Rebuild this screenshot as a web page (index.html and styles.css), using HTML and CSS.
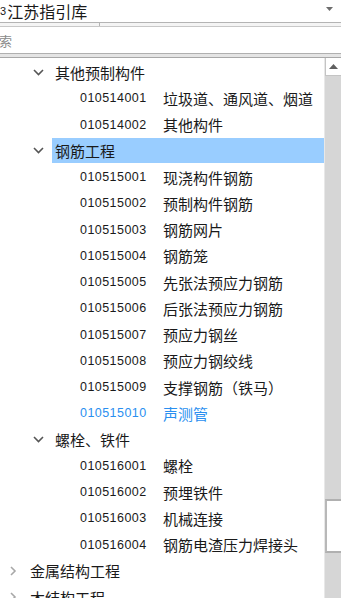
FILE: index.html
```html
<!DOCTYPE html>
<html>
<head>
<meta charset="utf-8">
<link rel="stylesheet" href="styles.css">
</head>
<body>
<div class="combo">
  <span class="combo-text"><span class="num">3</span>江苏指引库</span>
  <svg class="combo-arrow" width="7" height="4" viewBox="0 0 7 4"><polygon points="0,0 7,0 3.5,4" fill="#6d6d6d"/></svg>
</div>
<div class="splitter"><span class="tick"></span></div>
<div class="search"><span class="placeholder">搜索</span></div>
<div class="sep"></div>
<div class="tree">
  <div class="list">
    <div class="row l1">
      <svg class="chev" width="11" height="7" viewBox="0 0 11 7"><polyline points="1,1 5.5,5.5 10,1" fill="none" stroke="#555" stroke-width="1.6"/></svg>
      <span class="label">其他预制构件</span>
    </div>
    <div class="row l2"><span class="code">010514001</span><span class="name">垃圾道、通风道、烟道</span></div>
    <div class="row l2"><span class="code">010514002</span><span class="name">其他构件</span></div>
    <div class="row l1">
      <svg class="chev" width="11" height="7" viewBox="0 0 11 7"><polyline points="1,1 5.5,5.5 10,1" fill="none" stroke="#555" stroke-width="1.6"/></svg>
      <span class="label selected">钢筋工程</span>
    </div>
    <div class="row l2"><span class="code">010515001</span><span class="name">现浇构件钢筋</span></div>
    <div class="row l2"><span class="code">010515002</span><span class="name">预制构件钢筋</span></div>
    <div class="row l2"><span class="code">010515003</span><span class="name">钢筋网片</span></div>
    <div class="row l2"><span class="code">010515004</span><span class="name">钢筋笼</span></div>
    <div class="row l2"><span class="code">010515005</span><span class="name">先张法预应力钢筋</span></div>
    <div class="row l2"><span class="code">010515006</span><span class="name">后张法预应力钢筋</span></div>
    <div class="row l2"><span class="code">010515007</span><span class="name">预应力钢丝</span></div>
    <div class="row l2"><span class="code">010515008</span><span class="name">预应力钢绞线</span></div>
    <div class="row l2"><span class="code">010515009</span><span class="name">支撑钢筋（铁马）</span></div>
    <div class="row l2 link"><span class="code">010515010</span><span class="name">声测管</span></div>
    <div class="row l1">
      <svg class="chev" width="11" height="7" viewBox="0 0 11 7"><polyline points="1,1 5.5,5.5 10,1" fill="none" stroke="#555" stroke-width="1.6"/></svg>
      <span class="label">螺栓、铁件</span>
    </div>
    <div class="row l2"><span class="code">010516001</span><span class="name">螺栓</span></div>
    <div class="row l2"><span class="code">010516002</span><span class="name">预埋铁件</span></div>
    <div class="row l2"><span class="code">010516003</span><span class="name">机械连接</span></div>
    <div class="row l2"><span class="code">010516004</span><span class="name">钢筋电渣压力焊接头</span></div>
    <div class="row l0">
      <svg class="chev-r" width="7" height="10" viewBox="0 0 7 10"><polyline points="1,1 5,5 1,9" fill="none" stroke="#a8a8a8" stroke-width="1.6"/></svg>
      <span class="label">金属结构工程</span>
    </div>
    <div class="row l0">
      <svg class="chev-r" width="7" height="10" viewBox="0 0 7 10"><polyline points="1,1 5,5 1,9" fill="none" stroke="#a8a8a8" stroke-width="1.6"/></svg>
      <span class="label">木结构工程</span>
    </div>
  </div>
  <div class="scrollbar">
    <div class="sb-btn">
      <svg width="9" height="5" viewBox="0 0 9 5"><polygon points="0,5 9,5 4.5,0" fill="#606060"/></svg>
    </div>
    <div class="sb-thumb"></div>
  </div>
</div>
</body>
</html>
```
FILE: styles.css
```css
html, body {
  margin: 0;
  padding: 0;
}
body {
  width: 341px;
  height: 599px;
  overflow: hidden;
  background: #fff;
  font-family: "Noto Sans CJK SC", "Liberation Sans", sans-serif;
  color: #1a1a1a;
}
.combo {
  height: 22px;
  display: flex;
  align-items: center;
  justify-content: space-between;
  padding-right: 8px;
  box-sizing: border-box;
  background: #fff;
}
.combo-text {
  font-size: 16px;
  line-height: 22px;
  white-space: nowrap;
  display: flex;
  align-items: center;
}
.combo-text .num {
  font-family: "Liberation Sans", sans-serif;
  font-size: 11px;
  margin-right: 1px;
}
.combo-arrow {
  margin-top: -4px;
}
.splitter {
  height: 3px;
  border-top: 1px solid #b4b4b4;
  border-bottom: 1px solid #c8c8c8;
  background: #f4f4f4;
  position: relative;
}
.tick {
  position: absolute;
  left: 99px;
  top: 0;
  width: 1px;
  height: 3px;
  background: #b4b4b4;
}
.search {
  height: 26px;
  overflow: hidden;
  display: flex;
  align-items: center;
}
.placeholder {
  font-size: 13px;
  color: #8a8a8a;
  margin-left: -1px;
  white-space: nowrap;
  text-indent: -13px;
  display: block;
}
.sep {
  height: 3px;
  border-top: 1px solid #b0b0b0;
  border-bottom: 1px solid #a8a8a8;
  background: #e4e4e4;
}
.tree {
  display: flex;
  height: 540px;
}
.list {
  flex: 1;
  padding-top: 1px;
  overflow: hidden;
}
.row {
  height: 26.25px;
  display: flex;
  align-items: center;
  white-space: nowrap;
  font-size: 15px;
}
.row.l1 {
  padding-left: 33px;
}
.row.l1 .chev {
  flex: none;
}
.row.l1 .label {
  margin-left: 8px;
  padding-left: 3px;
  height: 25px;
  line-height: 25px;
  flex: 1;
}
.row.l1 .label.selected {
  background: #99cdff;
}
.row.l2 {
  padding-left: 80px;
}
.code {
  font-family: "Liberation Sans", sans-serif;
  font-size: 12.5px;
  letter-spacing: 0.45px;
  width: 83px;
  flex: none;
}
.row.link {
  color: #2a8ff0;
}
.row.l0 {
  padding-left: 10px;
}
.row.l0 .label {
  margin-left: 13px;
}
.scrollbar {
  width: 16px;
  flex: none;
  background: #d6d6d6;
  border-left: 1px solid #e8e8e8;
  display: flex;
  flex-direction: column;
}
.sb-btn {
  height: 17px;
  background: #fff;
  border-bottom: 1px solid #c4c4c4;
  border-left: 1px solid #c4c4c4;
  display: flex;
  align-items: center;
  justify-content: center;
}
.sb-thumb {
  margin-top: 423px;
  height: 50px;
  background: #fff;
  border-top: 2px solid #b0b0b0;
  border-bottom: 2px solid #b0b0b0;
  border-left: 2px solid #b8b8b8;
}
```
